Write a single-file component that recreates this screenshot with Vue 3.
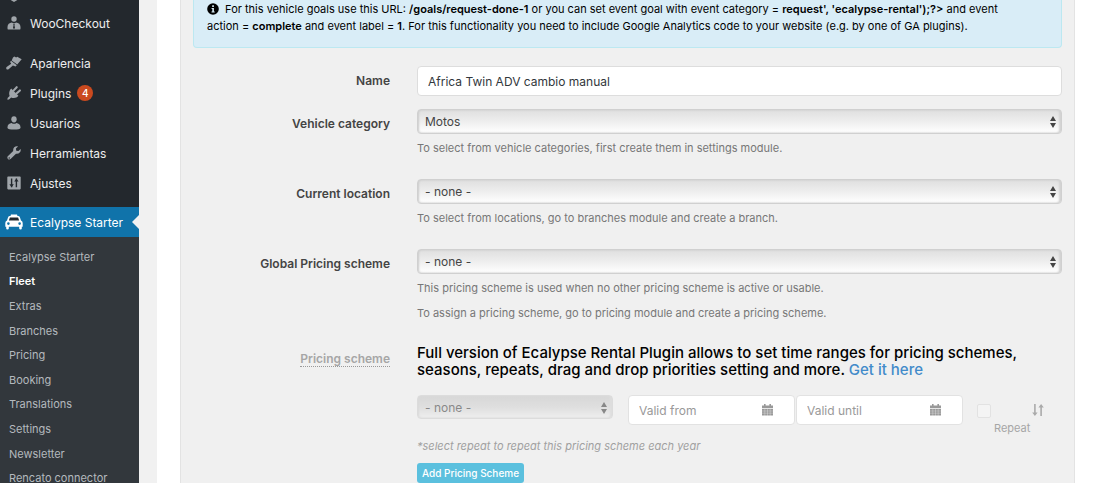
<script setup>
import { ref } from 'vue'

const menu = [
  { label: 'WooCheckout', icon: 'checkout' },
  { label: 'Apariencia', icon: 'brush', gap: true },
  { label: 'Plugins', icon: 'plug', badge: 4 },
  { label: 'Usuarios', icon: 'user' },
  { label: 'Herramientas', icon: 'wrench' },
  { label: 'Ajustes', icon: 'sliders' },
]

const submenu = [
  'Ecalypse Starter', 'Fleet', 'Extras', 'Branches', 'Pricing',
  'Booking', 'Translations', 'Settings', 'Newsletter', 'Rencato connector',
]
const current = 'Fleet'

const name = ref('Africa Twin ADV cambio manual')

const selects = [
  { id: 'category', label: 'Vehicle category', value: 'Motos', help: ['To select from vehicle categories, first create them in settings module.'] },
  { id: 'location', label: 'Current location', value: '- none -', help: ['To select from locations, go to branches module and create a branch.'] },
  {
    id: 'scheme', label: 'Global Pricing scheme', value: '- none -',
    help: [
      'This pricing scheme is used when no other pricing scheme is active or usable.',
      'To assign a pricing scheme, go to pricing module and create a pricing scheme.',
    ],
  },
]

const dates = [
  { id: 'from', label: 'Valid from' },
  { id: 'until', label: 'Valid until' },
]
</script>

<template>
  <div class="page">
    <nav class="sidebar">
      <div class="stub">
        <svg viewBox="0 0 14 14"><path d="M2 4 L7 1 L12 4 V11 L7 14 L2 11 Z" /></svg>
      </div>
      <a v-for="m in menu" :key="m.label" href="#" class="item" :class="{ spaced: m.gap }">
        <svg v-if="m.icon === 'checkout'" viewBox="0 0 14 14">
          <circle cx="7" cy="3" r="2.7" />
          <path fill-rule="evenodd" d="M.5 11 C.5 8 2.4 6.6 4.8 6.4 L7 7.4 L9.2 6.4 C11.6 6.6 13.5 8 13.5 11 V12.4 Q13.5 13.6 12.3 13.6 H1.7 Q.5 13.6 .5 12.4 Z M6.2 8 L6.6 9 L6 12 L7 13 L8 12 L7.4 9 L7.8 8 Z" />
        </svg>
        <svg v-else-if="m.icon === 'brush'" class="wide" viewBox="0 0 16 14">
          <path d="M7 1.6 L8.3 .5 L10.2 1.5 L11.2 .8 L15.7 3.2 L11.2 8.6 L5.7 4.4 Z" />
          <path d="M5 4.8 L10.8 9.2 L9.5 10.5 L6.9 9.5 L2.6 13.3 Q1.2 13.9 .4 13 Q-.1 12.2 .6 11.1 L5.2 7.8 L4.1 6 Z" />
        </svg>
        <svg v-else-if="m.icon === 'plug'" viewBox="0 0 14 14">
          <path d="M4.2 2.6 L11.4 9.8 C9.8 12.1 6.6 12.6 4.2 11.5 L2 13.5 L.4 13.7 L.6 12 L2.6 9.9 C1.6 7.5 2.3 4.3 4.2 2.6 Z" />
          <path d="M6.5 4.6 L9.7 1.2 M9.5 7.6 L12.9 4.4" fill="none" stroke="currentColor" stroke-width="2.1" stroke-linecap="round" />
        </svg>
        <svg v-else-if="m.icon === 'user'" viewBox="0 0 14 14">
          <ellipse cx="7" cy="3.3" rx="2.7" ry="3.1" />
          <path d="M.5 11.2 C.5 8.6 2.4 7.2 4.6 6.9 Q7 8.8 9.4 6.9 C11.6 7.2 13.5 8.6 13.5 11.2 V12 Q12.8 13.6 7 13.6 T.5 12 Z" />
        </svg>
        <svg v-else-if="m.icon === 'wrench'" viewBox="0 0 14 14">
          <path d="M13.6 3 L11.4 5.1 L9.3 4.7 L8.9 2.6 L11 .5 C8.4-.3 5.7 1.8 6.2 4.9 L.8 10.3 C-.7 12.1 1.8 14.6 3.6 13.1 L9 7.7 C12.2 8.3 14.4 5.6 13.6 3 Z M2.2 11.3 A.7 .7 0 1 1 2.2 12.7 A.7 .7 0 1 1 2.2 11.3 Z" fill-rule="evenodd" />
        </svg>
        <svg v-else viewBox="0 0 14 14">
          <rect x=".3" y=".6" width="13.4" height="12.8" rx=".8" />
          <path d="M4.6 2.6 V11.2 M9.4 2.6 V11.2" fill="none" stroke="#23282d" stroke-width="1.4" />
          <path d="M2.4 8.2 H6.8 L4.6 11.2 Z M7.2 5.6 H11.6 L9.4 2.6 Z" fill="#23282d" />
        </svg>
        <span>{{ m.label }}</span>
        <b v-if="m.badge" class="badge">{{ m.badge }}</b>
      </a>
      <a href="#" class="item active">
        <svg class="taxi" viewBox="0 0 18 16">
          <path d="M6 .4 H12 L12.6 2.2 H5.4 Z" />
          <path fill-rule="evenodd" d="M4.8 2 H13.2 Q14.4 2 14.9 3.2 L16 6.4 Q17.7 7 17.7 9 V12.8 H16.8 V14.6 Q16.8 15.6 15.6 15.6 Q14.2 15.6 14.2 14.6 V12.8 H3.8 V14.6 Q3.8 15.6 2.4 15.6 Q1.2 15.6 1.2 14.6 V12.8 H.3 V9 Q.3 7 2 6.4 L3.1 3.2 Q3.6 2 4.8 2 Z M3.4 8.3 A1.3 1.3 0 1 0 3.4 10.9 A1.3 1.3 0 1 0 3.4 8.3 Z M14.6 8.3 A1.3 1.3 0 1 0 14.6 10.9 A1.3 1.3 0 1 0 14.6 8.3 Z" />
          <path d="M4.9 3.4 H13.1 L14.1 6.6 H3.9 Z" fill="#23282d" />
        </svg>
        <span>Ecalypse Starter</span>
      </a>
      <ul class="submenu">
        <li v-for="s in submenu" :key="s">
          <a href="#" :class="{ current: s === current }">{{ s }}</a>
        </li>
      </ul>
    </nav>

    <main class="content">
      <form class="panel" @submit.prevent>
        <p class="alert">
          <svg viewBox="0 0 12 12">
            <circle cx="6" cy="6" r="5.8" />
            <path d="M4.6 5 H6.9 V8.4 H7.7 V9.5 H4.5 V8.4 H5.3 V6.1 H4.6 Z M5.2 2.2 H6.9 V3.9 H5.2 Z" fill="#d9edf7" />
          </svg>
          For this vehicle goals use this URL: <b>/goals/request-done-1</b> or you can set event goal with event category = <b>request', 'ecalypse-rental');?&gt;</b> and event action = <b>complete</b> and event label = <b>1</b>. For this functionality you need to include Google Analytics code to your website (e.g. by one of GA plugins).
        </p>

        <div class="row">
          <label class="label" for="name">Name</label>
          <input id="name" v-model="name" class="text" type="text">
        </div>

        <div class="selects">
          <div v-for="s in selects" :key="s.id" class="row">
            <label class="label" :for="s.id">{{ s.label }}</label>
            <div class="field">
              <div class="select">
                <select :id="s.id"><option>{{ s.value }}</option></select>
                <svg viewBox="0 0 6 12"><path d="M0 5 L3 0 L6 5 Z M0 7 H6 L3 12 Z" /></svg>
              </div>
              <p v-for="h in s.help" :key="h" class="help">{{ h }}</p>
            </div>
          </div>
        </div>

        <div class="row pricing">
          <label class="label muted" for="range"><abbr>Pricing scheme</abbr></label>
          <div class="field">
            <h4>Full version of Ecalypse Rental Plugin allows to set time ranges for pricing schemes, seasons, repeats, drag and drop priorities setting and more. <a href="#">Get it here</a></h4>
            <div class="range">
              <div class="select">
                <select id="range" disabled><option>- none -</option></select>
                <svg viewBox="0 0 6 12"><path d="M0 5 L3 0 L6 5 Z M0 7 H6 L3 12 Z" /></svg>
              </div>
              <div class="dates">
                <div v-for="d in dates" :key="d.id" class="date">
                  <input :id="d.id" class="text" type="text" :placeholder="d.label" :aria-label="d.label" disabled>
                  <svg viewBox="0 0 11 12">
                    <path d="M0 1.5 H2 V0 H3.6 V1.5 H7.4 V0 H9 V1.5 H11 V4 H0 Z M0 4.7 H11 V11.4 H0 Z" />
                    <path d="M0 7 H11 M0 9.2 H11 M2.8 5 V12 M5.5 5 V12 M8.2 5 V12" fill="none" stroke="#fff" stroke-width=".3" />
                  </svg>
                </div>
              </div>
              <label class="repeat">
                <input type="checkbox" disabled>
                <span>Repeat</span>
              </label>
              <svg class="sort" viewBox="0 0 12 12">
                <path d="M2.1 0 H3.7 V8.6 H5.6 L2.9 12 L.2 8.6 H2.1 Z M8.3 12 H9.9 V3.4 H11.8 L9.1 0 L6.4 3.4 H8.3 Z" />
              </svg>
            </div>
            <p class="hint">*select repeat to repeat this pricing scheme each year</p>
            <button type="button" class="add">Add Pricing Scheme</button>
          </div>
        </div>
      </form>
    </main>
  </div>
</template>

<style>
body { margin: 0; }
</style>

<style scoped>
* { box-sizing: border-box; }
.page {
  display: flex;
  height: 100vh;
  overflow: hidden;
  background: #f1f1f1;
  color: #000;
  font-family: Inter, "Liberation Sans", sans-serif;
  font-size: 12px;
}
a { text-decoration: none; }
p, h4, ul { margin: 0; padding: 0; }
input, select, button { font: inherit; }

.sidebar { flex: 0 0 139px; background: #23282d; }
.stub { display: flex; align-items: flex-end; height: 8px; padding: 0 7px 6px; color: #a0a5aa; }
.item {
  position: relative;
  display: flex;
  align-items: center;
  gap: 9px;
  height: 30px;
  padding-left: 7px;
  color: #eee;
  font-size: 12px;
  white-space: nowrap;
}
.item svg, .stub svg { flex: none; width: 14px; height: 14px; fill: currentColor; color: #a0a5aa; }
.item svg.wide { width: 16px; margin: 0 -1px; }
.item.spaced { margin-top: 10px; }
.badge {
  width: 16px;
  height: 16px;
  margin-left: -3px;
  border-radius: 8px;
  background: #ca4a1f;
  color: #fff;
  font-size: 10px;
  font-weight: 500;
  line-height: 16px;
  text-align: center;
}
.item.active { margin-top: 9px; background: #1073aa; color: #fff; }
.item svg.taxi { width: 18px; height: 16px; margin: 0 -2px; color: #fff; }
.item.active::after {
  content: "";
  position: absolute;
  right: 0;
  border: 7px solid transparent;
  border-left: 0;
  border-right-color: #f1f1f1;
}
.submenu {
  display: grid;
  grid-template-rows: repeat(10, 1fr);
  align-items: center;
  height: 254px;
  padding: 7px 9px 1px;
  background: #32373c;
  list-style: none;
}
.submenu a { color: #b4b9be; font-size: 11px; white-space: nowrap; }
.submenu a.current { color: #fff; font-weight: 600; }

.content { flex: 1; min-width: 0; margin-left: 18px; padding: 0 25px 0 23px; background: #fff; }
.panel {
  min-height: 100vh;
  padding: 0 12px;
  border: solid #e3e3e3;
  border-width: 0 1px;
  background: #f0f0f0;
}
.alert {
  padding: 1px 32px 12px 13px;
  border: solid #bce8f1;
  border-width: 0 1px 1px;
  border-radius: 0 0 4px 4px;
  background: #d9edf7;
  font-size: 11px;
  line-height: 17px;
}
.alert svg { width: 12px; height: 12px; margin-right: 3px; vertical-align: -2px; }
.alert b { font-weight: 600; }

.row { display: grid; grid-template-columns: 197px 1fr; column-gap: 27px; margin-top: 18px; }
.label { padding-top: 6px; color: #444; font-size: 12px; font-weight: 600; line-height: 17px; text-align: right; }
.field { min-width: 0; }
.text {
  width: 100%;
  height: 30px;
  padding: 0 10px;
  border: 1px solid #ddd;
  border-radius: 4px;
  background: #fff;
  color: #32373c;
}
.select { position: relative; }
.select select {
  display: block;
  width: 100%;
  height: 25px;
  padding: 0 7px;
  border: 1px solid #d0d0d0;
  border-radius: 4px;
  appearance: none;
  background: linear-gradient(#dfdfdf, #eee 50%, #fff);
  box-shadow: inset 1px 0 2px #ccc, inset -2px 0 2px #d2d2d2;
  color: #444;
  opacity: 1;
}
.select svg { position: absolute; top: 7px; right: 6px; width: 6px; height: 12px; fill: #444; }
.selects { display: grid; row-gap: 20px; margin-top: 13px; }
.selects .row { margin-top: 0; }
.help { padding: 5px 0 1px; color: #777; font-size: 11px; line-height: 19px; }

.row.pricing { margin-top: 20px; }
.muted { color: #a6a6a6; }
.muted abbr { border-bottom: 1px dotted #999; }
h4 { font-size: 15px; font-weight: 500; line-height: 17px; }
h4 a { display: inline-block; color: #428bca; }
.range { display: grid; grid-template-columns: 196px 335px 61px 12px; justify-content: start; margin-top: 17px; align-items: start; }
.range .select { opacity: .6; }
.range .select select { height: 24px; background: linear-gradient(#c8c8c8, #d4d4d4 50%, #eee); }
.dates { display: grid; grid-template-columns: 1fr 1fr; gap: 1px; margin-left: 15px; margin-right: -15px; }
.date { position: relative; }
.date svg { position: absolute; top: 9px; right: 22px; width: 11px; height: 12px; fill: #999; }
.date .text { border-color: #e2e2e2; }
.date .text::placeholder { color: #999; opacity: 1; }
.repeat { display: block; padding: 9px 0 0 29px; color: #a6a6a6; font-size: 11px; line-height: 18px; }
.repeat input {
  display: block;
  width: 14px;
  height: 14px;
  margin: 0 0 1px;
  border: 1px solid #e2e2e2;
  border-radius: 2px;
  appearance: none;
  background: #f4f4f4;
}
.repeat span { display: block; padding-left: 17px; }
.sort { width: 12px; height: 12px; margin: 9px 0 0 23px; fill: #aaa; }
.hint { margin-top: 1px; color: #a0a0a0; font-size: 11px; font-style: italic; line-height: 17px; }
.add {
  display: block;
  height: 20px;
  margin-top: 8px;
  padding: 0 5px;
  border: 0;
  border-radius: 3px;
  background: #5bc0de;
  color: #fff;
  font-size: 10px;
  font-weight: 500;
}
</style>
